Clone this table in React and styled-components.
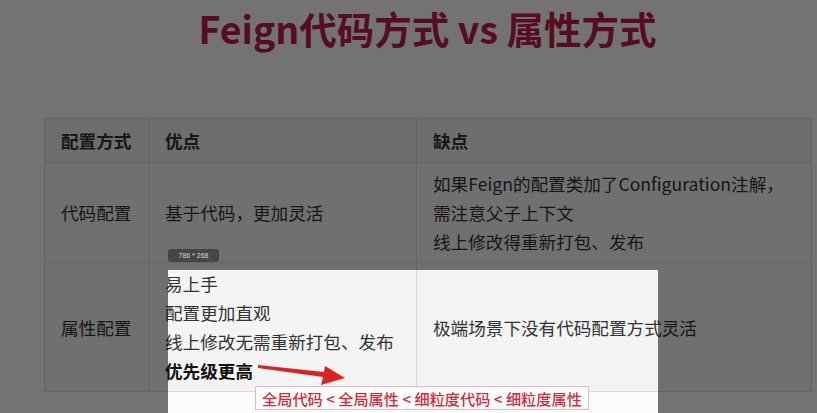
import styled, { createGlobalStyle } from 'styled-components'

const GlobalStyle = createGlobalStyle`
  html, body {
    margin: 0;
    padding: 0;
    background: #fbfbfb;
    font-family: "Noto Sans CJK SC", "Noto Sans", sans-serif;
  }
`

const Slide = styled.div`
  position: relative;
  width: 817px;
  height: 413px;
  overflow: hidden;
  box-sizing: border-box;
  padding: 2px 6px 0 44px;
  background: #fbfbfb;
`

const Title = styled.h1`
  margin: 0;
  height: 52px;
  line-height: 52px;
  text-align: center;
  font-size: 37.5px;
  font-weight: 700;
  color: #bb1b4a;
`

const Table = styled.table`
  margin-top: 64px;
  width: 767px;
  border-collapse: collapse;
  table-layout: fixed;
  font-size: 17.6px;
  line-height: 29px;
  color: #333;
`

// fixed layout: width is the content box, so take off padding + border
const Th = styled.th`
  width: ${p => p.$w - 33}px;
  text-align: left;
  font-weight: 700;
  padding: 7px 16px;
  background: #efefef;
  border: 1px solid #dadada;
`

const Td = styled.td`
  padding: 6px 16px;
  vertical-align: middle;
  background: #f4f4f4;
  border: 1px solid #dadada;
  white-space: nowrap;
`

const Line = styled.div`
  font-weight: ${p => (p.$strong ? 700 : 400)};
  color: ${p => (p.$strong ? '#111' : 'inherit')};
`

const Selection = styled.div`
  position: absolute;
  left: 168px;
  top: 270px;
  width: 490px;
  height: 160px;
  box-shadow: 0 0 0 1400px rgba(0, 0, 0, 0.54);
`

const SizeTag = styled.div`
  position: absolute;
  left: 0;
  top: -21px;
  width: 51px;
  height: 13px;
  border-radius: 3px;
  background: #464646;
  color: #d8d8d8;
  font-family: "Liberation Sans", Arial, sans-serif;
  font-size: 7px;
  line-height: 13px;
  text-align: center;
`

const Arrow = styled.svg`
  position: absolute;
  left: 87px;
  top: 90px;
`

const OrderBox = styled.div`
  position: absolute;
  left: 87px;
  top: 116px;
  padding: 0 6px;
  height: 22px;
  line-height: 22px;
  background: #fff;
  border: 1px solid #f2b3b9;
  color: #d9283c;
  font-size: 15.2px;
  font-weight: 500;
  white-space: nowrap;
`

const rows = [
  {
    name: '代码配置',
    pros: [{ t: '基于代码，更加灵活' }],
    cons: ['如果Feign的配置类加了Configuration注解，', '需注意父子上下文', '线上修改得重新打包、发布'],
  },
  {
    name: '属性配置',
    pros: [
      { t: '易上手' },
      { t: '配置更加直观' },
      { t: '线上修改无需重新打包、发布' },
      { t: '优先级更高', strong: true },
    ],
    cons: ['极端场景下没有代码配置方式灵活'],
  },
]

export default function App() {
  return (
    <>
      <GlobalStyle />
      <Slide>
        <Title>Feign代码方式 vs 属性方式</Title>
        <Table>
          <thead>
            <tr>
              <Th $w={104}>配置方式</Th>
              <Th $w={268}>优点</Th>
              <Th $w={395}>缺点</Th>
            </tr>
          </thead>
          <tbody>
            {rows.map(r => (
              <tr key={r.name}>
                <Td>{r.name}</Td>
                <Td>
                  {r.pros.map(p => (
                    <Line key={p.t} $strong={p.strong}>{p.t}</Line>
                  ))}
                </Td>
                <Td>
                  {r.cons.map(c => (
                    <Line key={c}>{c}</Line>
                  ))}
                </Td>
              </tr>
            ))}
          </tbody>
        </Table>

        <Selection>
          <SizeTag>786 * 268</SizeTag>
          <Arrow width="95" height="28" viewBox="0 0 95 28">
            <polygon points="3,5 69,12 70,6 90,18 66,25 68,17 3,8" fill="#d92222" />
          </Arrow>
          <OrderBox>全局代码 &lt; 全局属性 &lt; 细粒度代码 &lt; 细粒度属性</OrderBox>
        </Selection>
      </Slide>
    </>
  )
}
